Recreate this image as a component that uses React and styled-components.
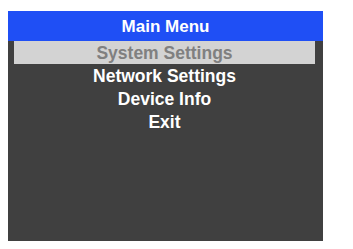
import React from 'react';
import styled, { createGlobalStyle } from 'styled-components';

const GlobalStyle = createGlobalStyle`
  body {
    margin: 0;
    background: #ffffff;
    font-family: "Liberation Sans", Arial, sans-serif;
  }
`;

const Page = styled.div`
  padding: 11px 0 0 8px;
`;

const Screen = styled.div`
  width: 315px;
  height: 230px;
  background-color: #404040;
  display: flex;
  flex-direction: column;
`;

const Header = styled.div`
  height: 30px;
  background-color: #1f4ff5;
  color: #ffffff;
  font-size: 17px;
  font-weight: bold;
  display: flex;
  align-items: center;
  justify-content: center;
  padding-top: 1px;
  box-sizing: border-box;
`;

const MenuList = styled.ul`
  list-style: none;
  margin: 0;
  padding: 0 8px 0 6px;
  display: flex;
  flex-direction: column;
`;

const MenuItem = styled.li`
  height: 23px;
  box-sizing: border-box;
  padding-top: 2px;
  display: flex;
  align-items: center;
  justify-content: center;
  font-size: 17.5px;
  font-weight: bold;
  color: ${(p) => (p.$selected ? '#808080' : '#ffffff')};
  background-color: ${(p) => (p.$selected ? '#d3d3d3' : 'transparent')};
`;

const items = ['System Settings', 'Network Settings', 'Device Info', 'Exit'];

export default function App() {
  return (
    <>
      <GlobalStyle />
      <Page>
        <Screen>
          <Header>Main Menu</Header>
          <MenuList>
            {items.map((label, i) => (
              <MenuItem key={label} $selected={i === 0}>
                {label}
              </MenuItem>
            ))}
          </MenuList>
        </Screen>
      </Page>
    </>
  );
}
